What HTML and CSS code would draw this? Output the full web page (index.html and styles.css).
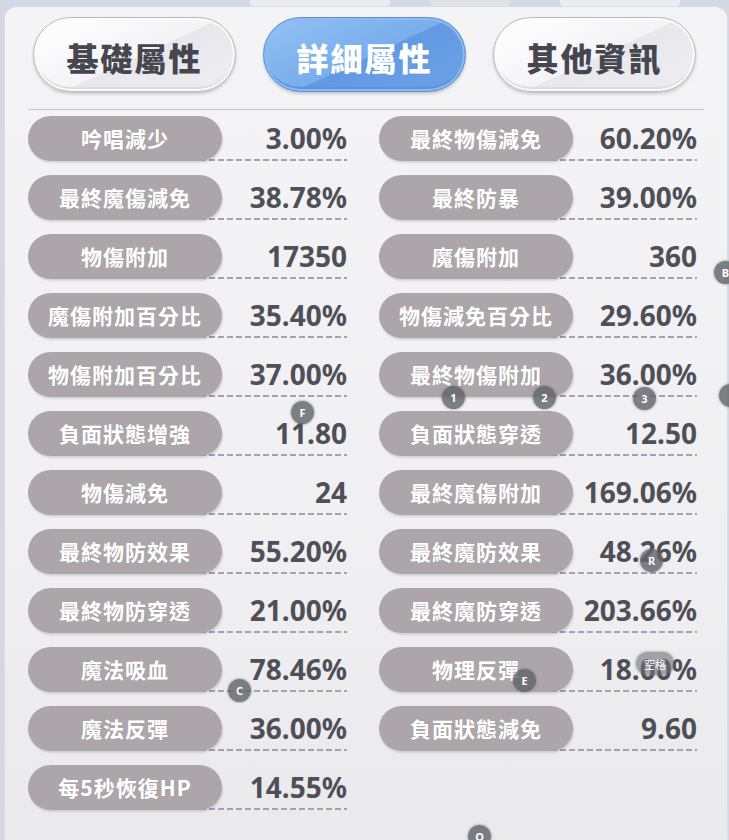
FILE: index.html
```html
<!DOCTYPE html>
<html lang="zh-Hant">
<head>
<meta charset="utf-8">
<title>詳細屬性</title>
<link rel="stylesheet" href="styles.css">
</head>
<body>
<div class="backdrop">
  <span class="blob blob-a"></span>
  <span class="blob blob-b"></span>
  <span class="blob blob-c"></span>
</div>
<main class="panel">
  <nav class="tabs">
    <div class="tab tab-light"><span>基礎屬性</span></div>
    <div class="tab tab-active"><span>詳細屬性</span></div>
    <div class="tab tab-light"><span>其他資訊</span></div>
  </nav>
  <div class="divider"></div>
  <section class="grid">
    <div class="row"><div class="label">吟唱減少</div><div class="value">3.00%</div></div>
    <div class="row"><div class="label">最終物傷減免</div><div class="value">60.20%</div></div>
    <div class="row"><div class="label">最終魔傷減免</div><div class="value">38.78%</div></div>
    <div class="row"><div class="label">最終防暴</div><div class="value">39.00%</div></div>
    <div class="row"><div class="label">物傷附加</div><div class="value">17350</div></div>
    <div class="row"><div class="label">魔傷附加</div><div class="value">360</div></div>
    <div class="row"><div class="label">魔傷附加百分比</div><div class="value">35.40%</div></div>
    <div class="row"><div class="label">物傷減免百分比</div><div class="value">29.60%</div></div>
    <div class="row"><div class="label">物傷附加百分比</div><div class="value">37.00%</div></div>
    <div class="row"><div class="label">最終物傷附加</div><div class="value">36.00%</div></div>
    <div class="row"><div class="label">負面狀態增強</div><div class="value">11.80</div></div>
    <div class="row"><div class="label">負面狀態穿透</div><div class="value">12.50</div></div>
    <div class="row"><div class="label">物傷減免</div><div class="value">24</div></div>
    <div class="row"><div class="label">最終魔傷附加</div><div class="value">169.06%</div></div>
    <div class="row"><div class="label">最終物防效果</div><div class="value">55.20%</div></div>
    <div class="row"><div class="label">最終魔防效果</div><div class="value">48.26%</div></div>
    <div class="row"><div class="label">最終物防穿透</div><div class="value">21.00%</div></div>
    <div class="row"><div class="label">最終魔防穿透</div><div class="value">203.66%</div></div>
    <div class="row"><div class="label">魔法吸血</div><div class="value">78.46%</div></div>
    <div class="row"><div class="label">物理反彈</div><div class="value">18.00%</div></div>
    <div class="row"><div class="label">魔法反彈</div><div class="value">36.00%</div></div>
    <div class="row"><div class="label">負面狀態減免</div><div class="value">9.60</div></div>
    <div class="row"><div class="label">每5秒恢復HP</div><div class="value">14.55%</div></div>
  </section>
</main>
<span class="badge b-1">1</span>
<span class="badge b-2">2</span>
<span class="badge b-3">3</span>
<span class="badge b-f">F</span>
<span class="badge b-b">B</span>
<span class="badge b-x"></span>
<span class="badge b-c">C</span>
<span class="badge b-e">E</span>
<span class="badge b-r">R</span>
<span class="badge badge-wide b-space">空格</span>
<span class="badge b-q">Q</span>
</body>
</html>
```
FILE: styles.css
```css
* { box-sizing: border-box; }
html, body { margin: 0; padding: 0; }
body {
  width: 729px;
  height: 840px;
  overflow: hidden;
  position: relative;
  background: #d3d9e2;
  font-family: "Noto Sans CJK TC", "Noto Sans", sans-serif;
}
.backdrop { position: absolute; left: 0; top: 0; width: 729px; height: 10px; }
.blob { position: absolute; top: 0; height: 8px; background: #e9ecf1; border-radius: 0 0 6px 6px; }
.blob-a { left: 250px; width: 140px; }
.blob-b { left: 430px; width: 80px; background: #dfe3e9; }
.blob-c { left: 560px; width: 120px; }

.panel {
  position: relative;
  margin: 7px 0 0 5px;
  width: 722px;
  height: 900px;
  padding: 10px 23px 0;
  border-radius: 12px 12px 0 0;
  background: linear-gradient(#f4f4f6 0%, #f0f0f2 60%, #e8e8eb 100%);
  box-shadow: 0 0 0 1px #d9dde4;
}
.tabs { display: flex; gap: 27px; padding-left: 5px; }
.tab {
  width: 203px;
  height: 75px;
  border-radius: 38px;
  display: flex;
  align-items: center;
  justify-content: center;
  font-size: 32px;
  font-weight: 900;
  letter-spacing: 2px;
  padding-top: 4px;
}
.tab-light {
  color: #46474e;
  background: linear-gradient(155deg, #ffffff 0%, #f4f4f7 52%, #e7e7ec 53%, #eeeef2 100%);
  border: 1px solid #b8b8bf;
  box-shadow: inset 0 0 0 2px #fbfbfc, inset 0 -4px 0 #dcdce1, 0 2px 3px rgba(0,0,0,0.18);
}
.tab-active {
  color: #ffffff;
  background: linear-gradient(155deg, #93c1f2 0%, #78aeec 52%, #6399e2 53%, #6ba2e6 100%);
  border: 1px solid #5a8fd6;
  box-shadow: inset 0 0 0 2px #8dbbf0, inset 0 -4px 0 #5d93dc, 0 2px 3px rgba(0,0,0,0.18);
}
.divider { height: 1px; background: #c6c6cc; margin-top: 17px; }

.grid {
  display: grid;
  grid-template-columns: 319px 318px;
  column-gap: 32px;
  row-gap: 14px;
  margin-top: 6px;
}
.row { display: flex; height: 45px; }
.label {
  position: relative;
  z-index: 1;
  flex: none;
  width: 194px;
  height: 45px;
  border-radius: 23px;
  background: #aca5aa;
  color: #ffffff;
  font-size: 21px;
  font-weight: 700;
  line-height: 45px;
  text-align: center;
  letter-spacing: 1px;
  box-shadow: 1px 2px 2px rgba(0,0,0,0.12);
}
.value {
  flex: 1;
  margin-left: -22px;
  text-align: right;
  font-family: "Noto Sans", sans-serif;
  font-weight: 700;
  font-size: 28px;
  line-height: 45px;
  color: #4f5057;
  background: repeating-linear-gradient(90deg, #a2a2b0 0 6px, transparent 6px 9px) left bottom / 100% 2px no-repeat;
}

.badge {
  position: absolute;
  z-index: 5;
  width: 23px;
  height: 23px;
  border-radius: 50%;
  background: rgba(96, 100, 106, 0.82);
  box-shadow: 0 0 2px 1px rgba(96, 100, 106, 0.35);
  color: #ffffff;
  font-family: "Noto Sans", sans-serif;
  font-weight: 700;
  font-size: 11px;
  display: flex;
  align-items: center;
  justify-content: center;
}
.badge-wide {
  width: 38px;
  border-radius: 12px;
  font-weight: 400;
  font-size: 11px;
  background: rgba(110, 112, 118, 0.6);
  font-family: "Noto Sans CJK TC", sans-serif;
}
.b-1 { left: 442px; top: 386px; }
.b-2 { left: 533px; top: 386px; }
.b-3 { left: 633px; top: 387px; }
.b-f { left: 291px; top: 401px; }
.b-b { left: 714px; top: 261px; }
.b-x { left: 719px; top: 384px; }
.b-c { left: 228px; top: 679px; }
.b-e { left: 513px; top: 669px; }
.b-r { left: 640px; top: 549px; }
.b-space { left: 636px; top: 652px; }
.b-q { left: 468px; top: 825px; }
```
